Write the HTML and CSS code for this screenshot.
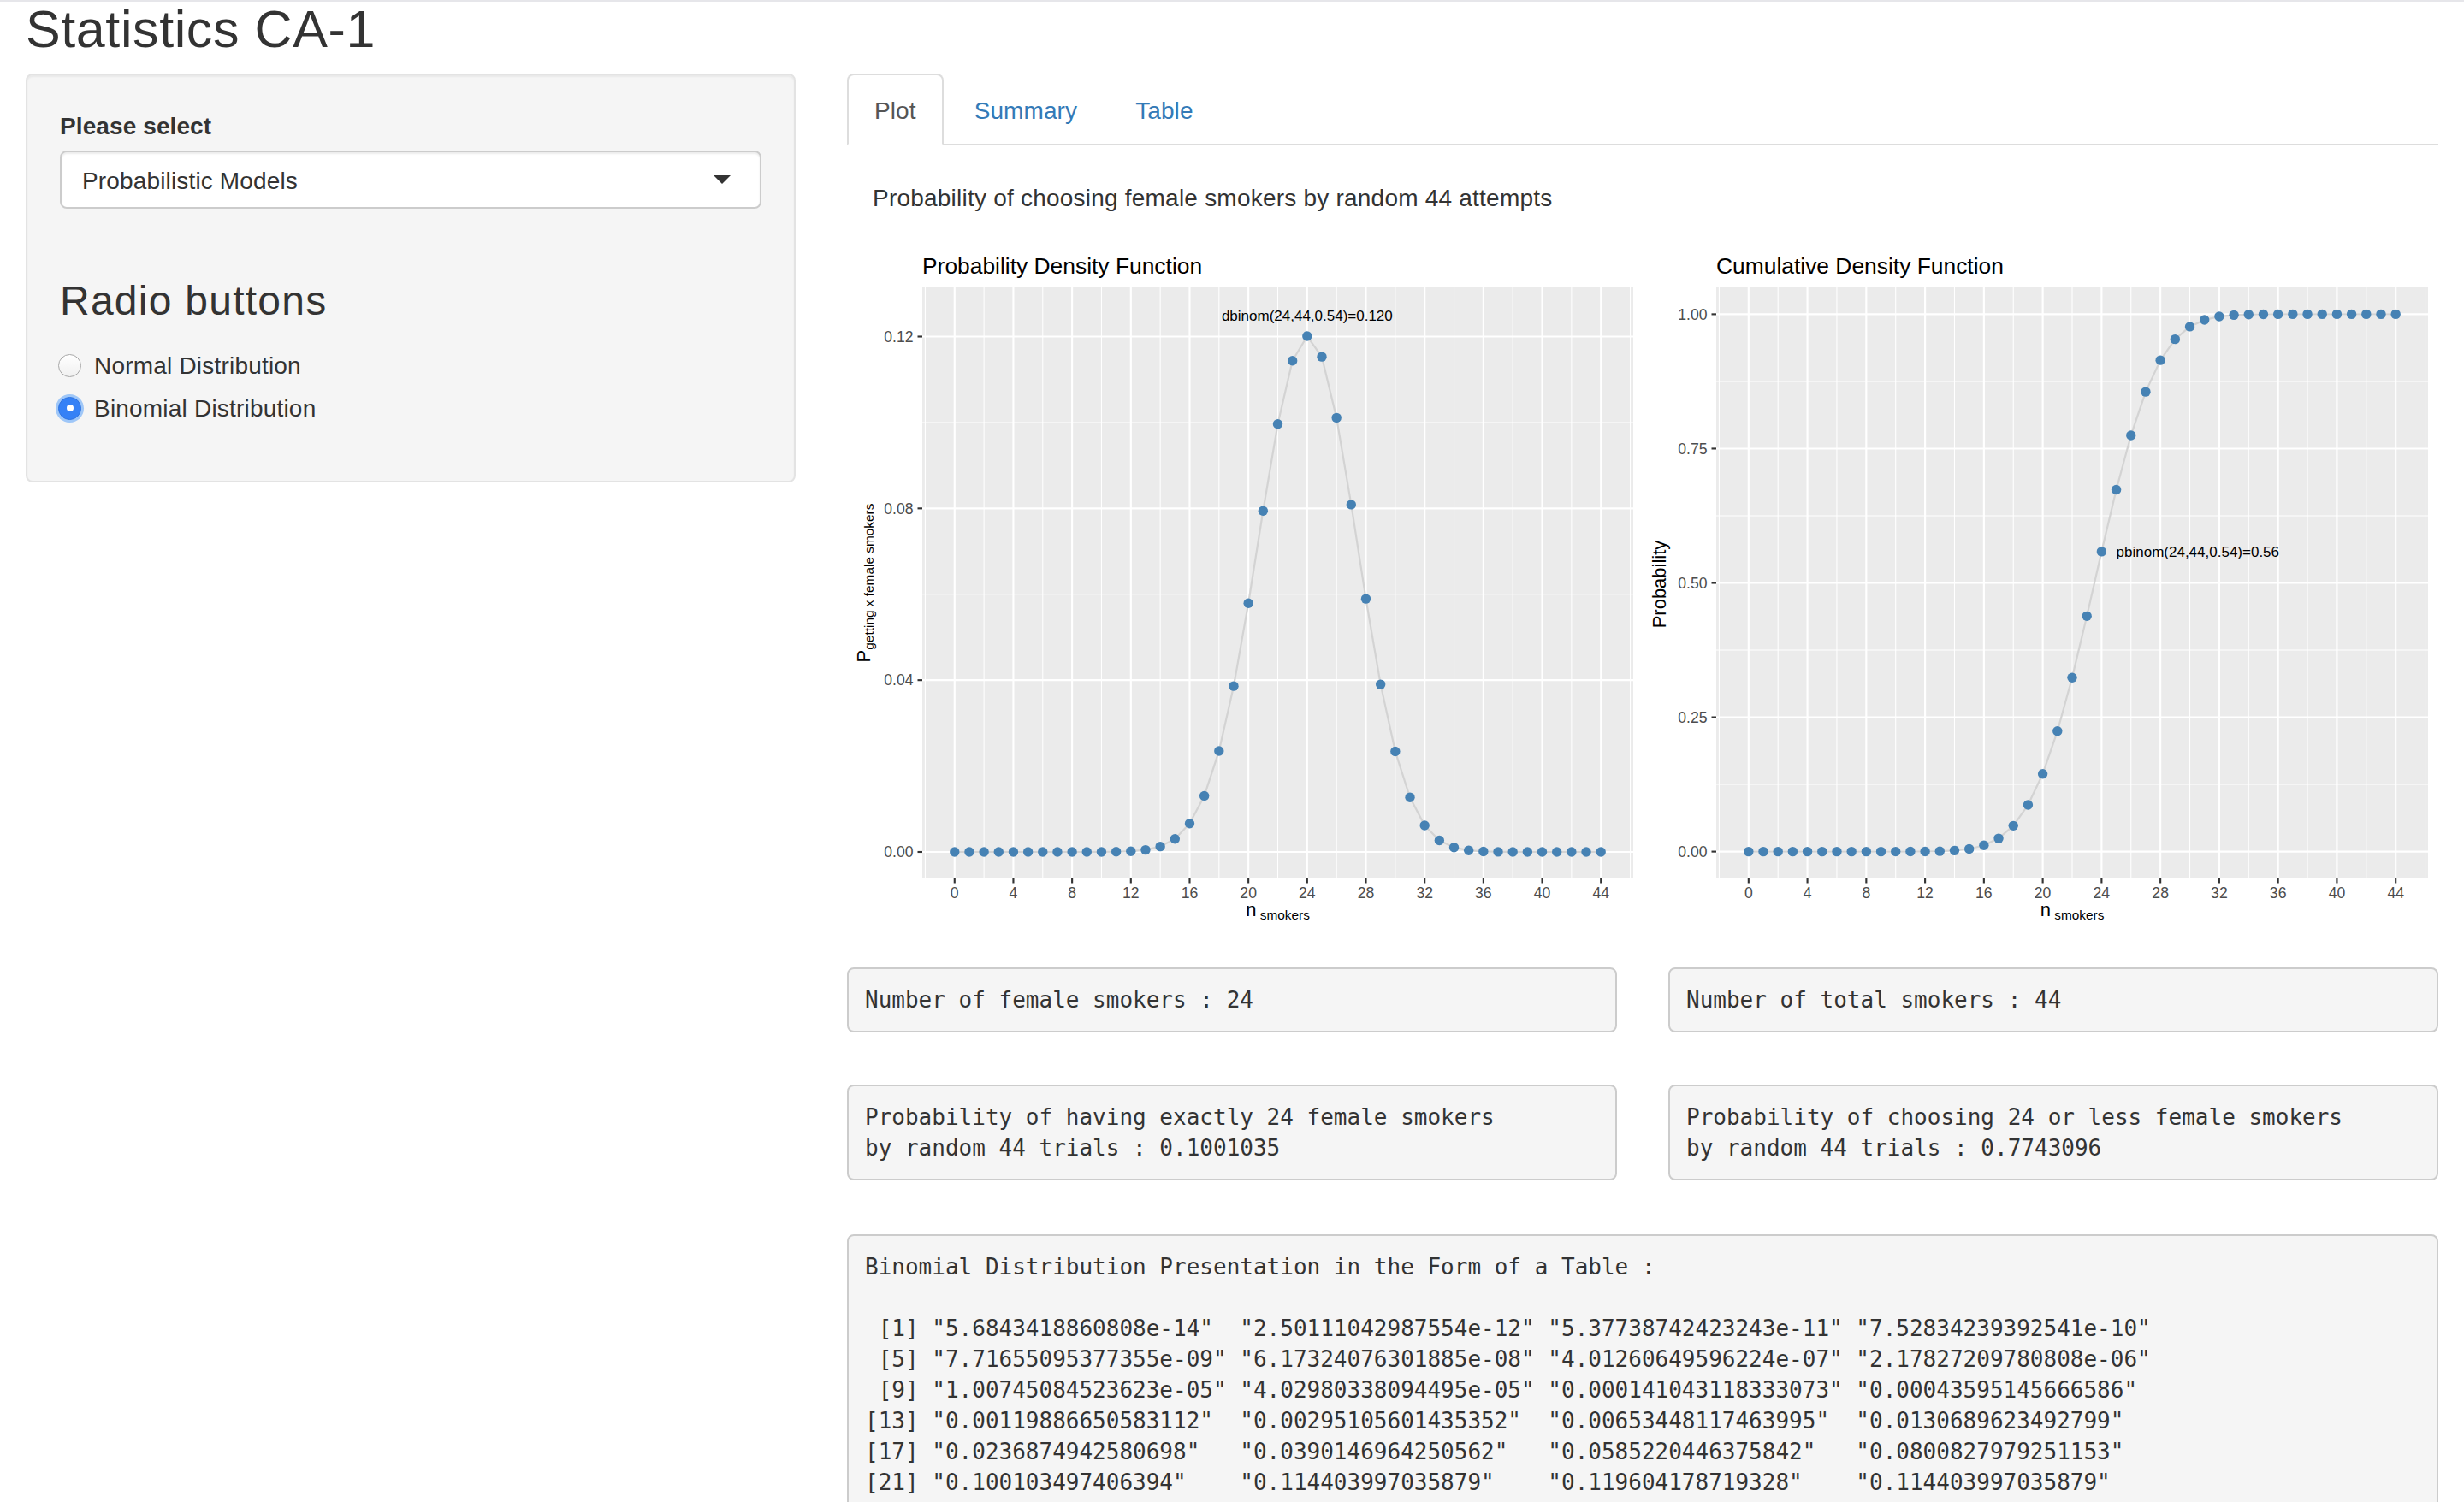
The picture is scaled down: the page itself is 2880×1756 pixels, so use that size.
FILE: index.html
```html
<!DOCTYPE html>
<html lang="en">
<head>
<meta charset="utf-8">
<title>Statistics CA-1</title>
<link rel="stylesheet" href="styles.css">
</head>
<body>
<div class="topline"></div>
<div class="container">
  <h2 class="title">Statistics CA-1</h2>
  <div class="layout">
    <div class="sidebar">
      <div class="well">
        <label class="control-label">Please select</label>
        <div class="select"><span class="select-text">Probabilistic Models</span><span class="caret"></span></div>
        <h3 class="radio-title">Radio buttons</h3>
        <div class="radios">
          <div class="radio"><span class="radio-circle"></span><span class="radio-label">Normal Distribution</span></div>
          <div class="radio"><span class="radio-circle checked"></span><span class="radio-label">Binomial Distribution</span></div>
        </div>
      </div>
    </div>
    <div class="main">
      <ul class="tabs">
        <li class="tab active"><a href="#">Plot</a></li>
        <li class="tab"><a href="#">Summary</a></li>
        <li class="tab"><a href="#">Table</a></li>
      </ul>
      <div class="tab-content">
        <p class="lead">Probability of choosing female smokers by random 44 attempts</p>
        <div class="plots">
          <svg class="plot" id="pdf" width="930" height="800" viewBox="0 0 930 800"></svg>
          <svg class="plot" id="cdf" width="930" height="800" viewBox="0 0 930 800"></svg>
        </div>
        <div class="pre-row first">
          <pre class="out">Number of female smokers : 24</pre>
          <pre class="out">Number of total smokers : 44</pre>
        </div>
        <div class="pre-row second">
          <pre class="out">Probability of having exactly 24 female smokers
by random 44 trials : 0.1001035</pre>
          <pre class="out">Probability of choosing 24 or less female smokers
by random 44 trials : 0.7743096</pre>
        </div>
        <pre class="out table-out">Binomial Distribution Presentation in the Form of a Table :

 [1] "5.6843418860808e-14"  "2.50111042987554e-12" "5.37738742423243e-11" "7.52834239392541e-10"
 [5] "7.71655095377355e-09" "6.17324076301885e-08" "4.01260649596224e-07" "2.17827209780808e-06"
 [9] "1.00745084523623e-05" "4.02980338094495e-05" "0.000141043118333073" "0.00043595145666586" 
[13] "0.00119886650583112"  "0.00295105601435352"  "0.00653448117463995"  "0.0130689623492799"  
[17] "0.0236874942580698"   "0.0390146964250562"   "0.0585220446375842"   "0.0800827979251153"  
[21] "0.100103497406394"    "0.114403997035879"    "0.119604178719328"    "0.114403997035879"   
[25] "0.100103497406394"    "0.0800827979251153"   "0.0585220446375842"   "0.0390146964250562"  
[29] "0.0236874942580698"   "0.0130689623492799"   "0.00653448117463995"  "0.00295105601435352" 
[33] "0.00119886650583112"  "0.00043595145666586"  "0.000141043118333073" "4.02980338094495e-05"
[37] "1.00745084523623e-05" "2.17827209780808e-06" "4.01260649596224e-07" "6.17324076301885e-08"
[41] "7.71655095377355e-09" "7.52834239392541e-10" "5.37738742423243e-11" "2.50111042987554e-12"
[45] "5.6843418860808e-14" </pre>
      </div>
    </div>
  </div>
</div>
<script src="script.js"></script>
</body>
</html>
```

FILE: styles.css
```css
* { box-sizing: border-box; }
html, body { margin: 0; padding: 0; background: #fff; }
body {
  font-family: "Liberation Sans", Arial, Helvetica, sans-serif;
  font-size: 28px;
  line-height: 40px;
  color: #333;
}
.topline { height: 2px; background: #e6e6ea; }
.container { padding: 0 30px; }
.title {
  margin: 0;
  font-size: 61px;
  line-height: 64px;
  font-weight: 400;
  letter-spacing: 0.6px;
  color: #333;
}
.layout {
  display: grid;
  grid-template-columns: 900px 1fr;
  column-gap: 60px;
  margin-top: 20px;
  align-items: start;
}

/* sidebar */
.well {
  background: #f5f5f5;
  border: 2px solid #e3e3e3;
  border-radius: 8px;
  box-shadow: inset 0 2px 2px rgba(0, 0, 0, 0.05);
  padding: 38px;
}
.control-label {
  display: block;
  font-weight: 700;
  padding-top: 2px;
  margin-bottom: 8px;
  letter-spacing: 0.1px;
}
.select {
  height: 68px;
  border: 2px solid #ccc;
  border-radius: 8px;
  background: #fff;
  box-shadow: inset 0 2px 2px rgba(0, 0, 0, 0.075);
  padding: 0 24px;
  display: flex;
  align-items: center;
  justify-content: space-between;
  color: #333;
}
.select-text { padding-top: 3px; letter-spacing: 0.15px; }
.caret {
  width: 0;
  height: 0;
  border-left: 10px solid transparent;
  border-right: 10px solid transparent;
  border-top: 10px solid #333;
  margin-right: 10px;
}
.radio-title {
  margin: 81px 0 29px;
  font-size: 48px;
  line-height: 53px;
  font-weight: 400;
  letter-spacing: 1.25px;
  color: #333;
}
.radios {
  display: flex;
  flex-direction: column;
  gap: 10px;
  margin-bottom: 27px;
}
.radio {
  display: flex;
  align-items: center;
  height: 40px;
}
.radio-label { padding-top: 2px; letter-spacing: 0.2px; }
.radio-circle {
  width: 27px;
  height: 27px;
  border-radius: 50%;
  margin-left: -2px;
  margin-right: 15px;
  background: linear-gradient(#ffffff, #f0f0f0);
  border: 1.5px solid #a8a8a8;
  flex: none;
  position: relative;
}
.radio-circle.checked {
  background: #3581f6;
  border: 1.5px solid #2f73e0;
  box-shadow: 0 0 0 3px rgba(88, 160, 250, 0.55);
}
.radio-circle.checked::after {
  content: "";
  position: absolute;
  left: 50%;
  top: 50%;
  width: 8px;
  height: 8px;
  margin: -4px 0 0 -4px;
  border-radius: 50%;
  background: #fff;
}

/* tabs */
.tabs {
  display: flex;
  list-style: none;
  margin: 0;
  padding: 0;
  border-bottom: 2px solid #ddd;
}
.tab { margin-right: 4px; margin-bottom: -2px; }
.tab a {
  display: block;
  padding: 22px 30px 18px;
  line-height: 40px;
  border: 2px solid transparent;
  border-radius: 8px 8px 0 0;
  color: #337ab7;
  text-decoration: none;
  letter-spacing: 0.1px;
}
.tab.active a {
  color: #555;
  background: #fff;
  border-color: #ddd;
  border-bottom-color: transparent;
}

.lead {
  margin: 42px 0 0;
  padding-left: 30px;
  color: #333;
  letter-spacing: 0.22px;
}
.plots {
  display: grid;
  grid-template-columns: 930px 930px;
  margin-top: 34px;
  height: 800px;
}
.plot { display: block; }

/* plot svg */
.plot text { font-family: "Liberation Sans", Arial, Helvetica, sans-serif; white-space: pre; }
.ptitle { font-size: 26.4px; fill: #000; }
.tlab { font-size: 17.6px; fill: #4d4d4d; }
.atitle { font-size: 22px; fill: #000; }
.sub { font-size: 15.4px; }
.ann { font-size: 17px; fill: #000; }
.panel { fill: #ebebeb; }
.minor { stroke: #fff; stroke-width: 1.07; }
.major { stroke: #fff; stroke-width: 2.13; }
.tick { stroke: #333; stroke-width: 2.13; }
.dline { fill: none; stroke: #d3d3d3; stroke-width: 2.2; stroke-linejoin: round; }
.dot { fill: #4682b4; }

/* verbatim outputs */
.pre-row {
  display: grid;
  grid-template-columns: 1fr 1fr;
  column-gap: 60px;
}
.pre-row.first { margin-top: 45px; }
.pre-row.second { margin-top: 61px; }
.out {
  margin: 0;
  padding: 18px 18px 18px 19px;
  border: 2px solid #ccc;
  border-radius: 8px;
  background: #f5f5f5;
  font-family: "DejaVu Sans Mono", "Liberation Mono", monospace;
  font-size: 26px;
  line-height: 36px;
  color: #333;
  white-space: pre;
  overflow: hidden;
}
.table-out { margin-top: 63px; }
```

FILE: script.js
```js
(function () {
  var n = 44, p = 24 / 44;
  function dbinom(k) {
    var l = 0;
    for (var i = 1; i <= k; i++) l += Math.log(n - k + i) - Math.log(i);
    return Math.exp(l + k * Math.log(p) + (n - k) * Math.log(1 - p));
  }
  var pdf = [], cdf = [], acc = 0;
  for (var k = 0; k <= n; k++) {
    var v = dbinom(k);
    pdf.push(v);
    acc += v;
    cdf.push(Math.min(acc, 1));
  }

  function ln(x1, y1, x2, y2, c) {
    return '<line class="' + c + '" x1="' + x1.toFixed(2) + '" y1="' + y1.toFixed(2) +
      '" x2="' + x2.toFixed(2) + '" y2="' + y2.toFixed(2) + '"/>';
  }

  function plot(svg, o) {
    var X = function (v) { return o.x0 + (v + 2.2) * o.kx; };
    var Y = function (v) { return o.y0 - v * o.ky; };
    var h = [];
    var right = o.x0 + o.w;
    h.push('<text class="ptitle" x="' + o.x0 + '" y="33.5">' + o.title + '</text>');
    h.push('<rect class="panel" x="' + o.x0 + '" y="50" width="' + o.w + '" height="691"/>');
    var m, t;
    for (m = -2; m <= 46; m += 4) h.push(ln(X(m), 50, X(m), 741, 'minor'));
    o.yminor.forEach(function (v) { h.push(ln(o.x0, Y(v), right, Y(v), 'minor')); });
    for (t = 0; t <= 44; t += 4) h.push(ln(X(t), 50, X(t), 741, 'major'));
    o.yticks.forEach(function (v) { h.push(ln(o.x0, Y(v), right, Y(v), 'major')); });
    var pts = o.vals.map(function (v, i) { return X(i).toFixed(2) + ',' + Y(v).toFixed(2); }).join(' ');
    h.push('<polyline class="dline" points="' + pts + '"/>');
    o.vals.forEach(function (v, i) {
      h.push('<circle class="dot" cx="' + X(i).toFixed(2) + '" cy="' + Y(v).toFixed(2) + '" r="5.7"/>');
    });
    o.yticks.forEach(function (v) {
      h.push(ln(o.x0 - 5.5, Y(v), o.x0, Y(v), 'tick'));
      h.push('<text class="tlab" x="' + (o.x0 - 10.5) + '" y="' + (Y(v) + 6.3).toFixed(2) +
        '" text-anchor="end">' + v.toFixed(2) + '</text>');
    });
    for (t = 0; t <= 44; t += 4) {
      h.push(ln(X(t), 741, X(t), 746.5, 'tick'));
      h.push('<text class="tlab" x="' + X(t).toFixed(2) + '" y="764" text-anchor="middle">' + t + '</text>');
    }
    h.push('<text class="atitle" x="' + (o.x0 + o.w / 2) + '" y="785" text-anchor="middle">n<tspan class="sub" dy="4"> smokers</tspan></text>');
    h.push(o.ytitle);
    h.push(o.ann(X, Y));
    svg.innerHTML = h.join('');
  }

  plot(document.getElementById('pdf'), {
    title: 'Probability Density Function',
    x0: 88, w: 831, kx: 17.169, y0: 710, ky: 5020.8,
    yticks: [0, 0.04, 0.08, 0.12], yminor: [0.02, 0.06, 0.10],
    vals: pdf,
    ytitle: '<text class="atitle" transform="translate(27,395.5) rotate(-90)" text-anchor="middle">P<tspan class="sub" dy="4">getting x female smokers</tspan></text>',
    ann: function (X, Y) {
      return '<text class="ann" x="' + X(24).toFixed(2) + '" y="88.5" text-anchor="middle">dbinom(24,44,0.54)=0.120</text>';
    }
  });

  plot(document.getElementById('cdf'), {
    title: 'Cumulative Density Function',
    x0: 86, w: 832, kx: 17.19, y0: 709.6, ky: 628.2,
    yticks: [0, 0.25, 0.5, 0.75, 1], yminor: [0.125, 0.375, 0.625, 0.875],
    vals: cdf,
    ytitle: '<text class="atitle" transform="translate(27,397) rotate(-90)" text-anchor="middle">Probability</text>',
    ann: function (X, Y) {
      return '<text class="ann" x="' + X(25).toFixed(2) + '" y="' + (Y(cdf[24]) + 6.1).toFixed(2) + '" text-anchor="start">pbinom(24,44,0.54)=0.56</text>';
    }
  });
})();
```
